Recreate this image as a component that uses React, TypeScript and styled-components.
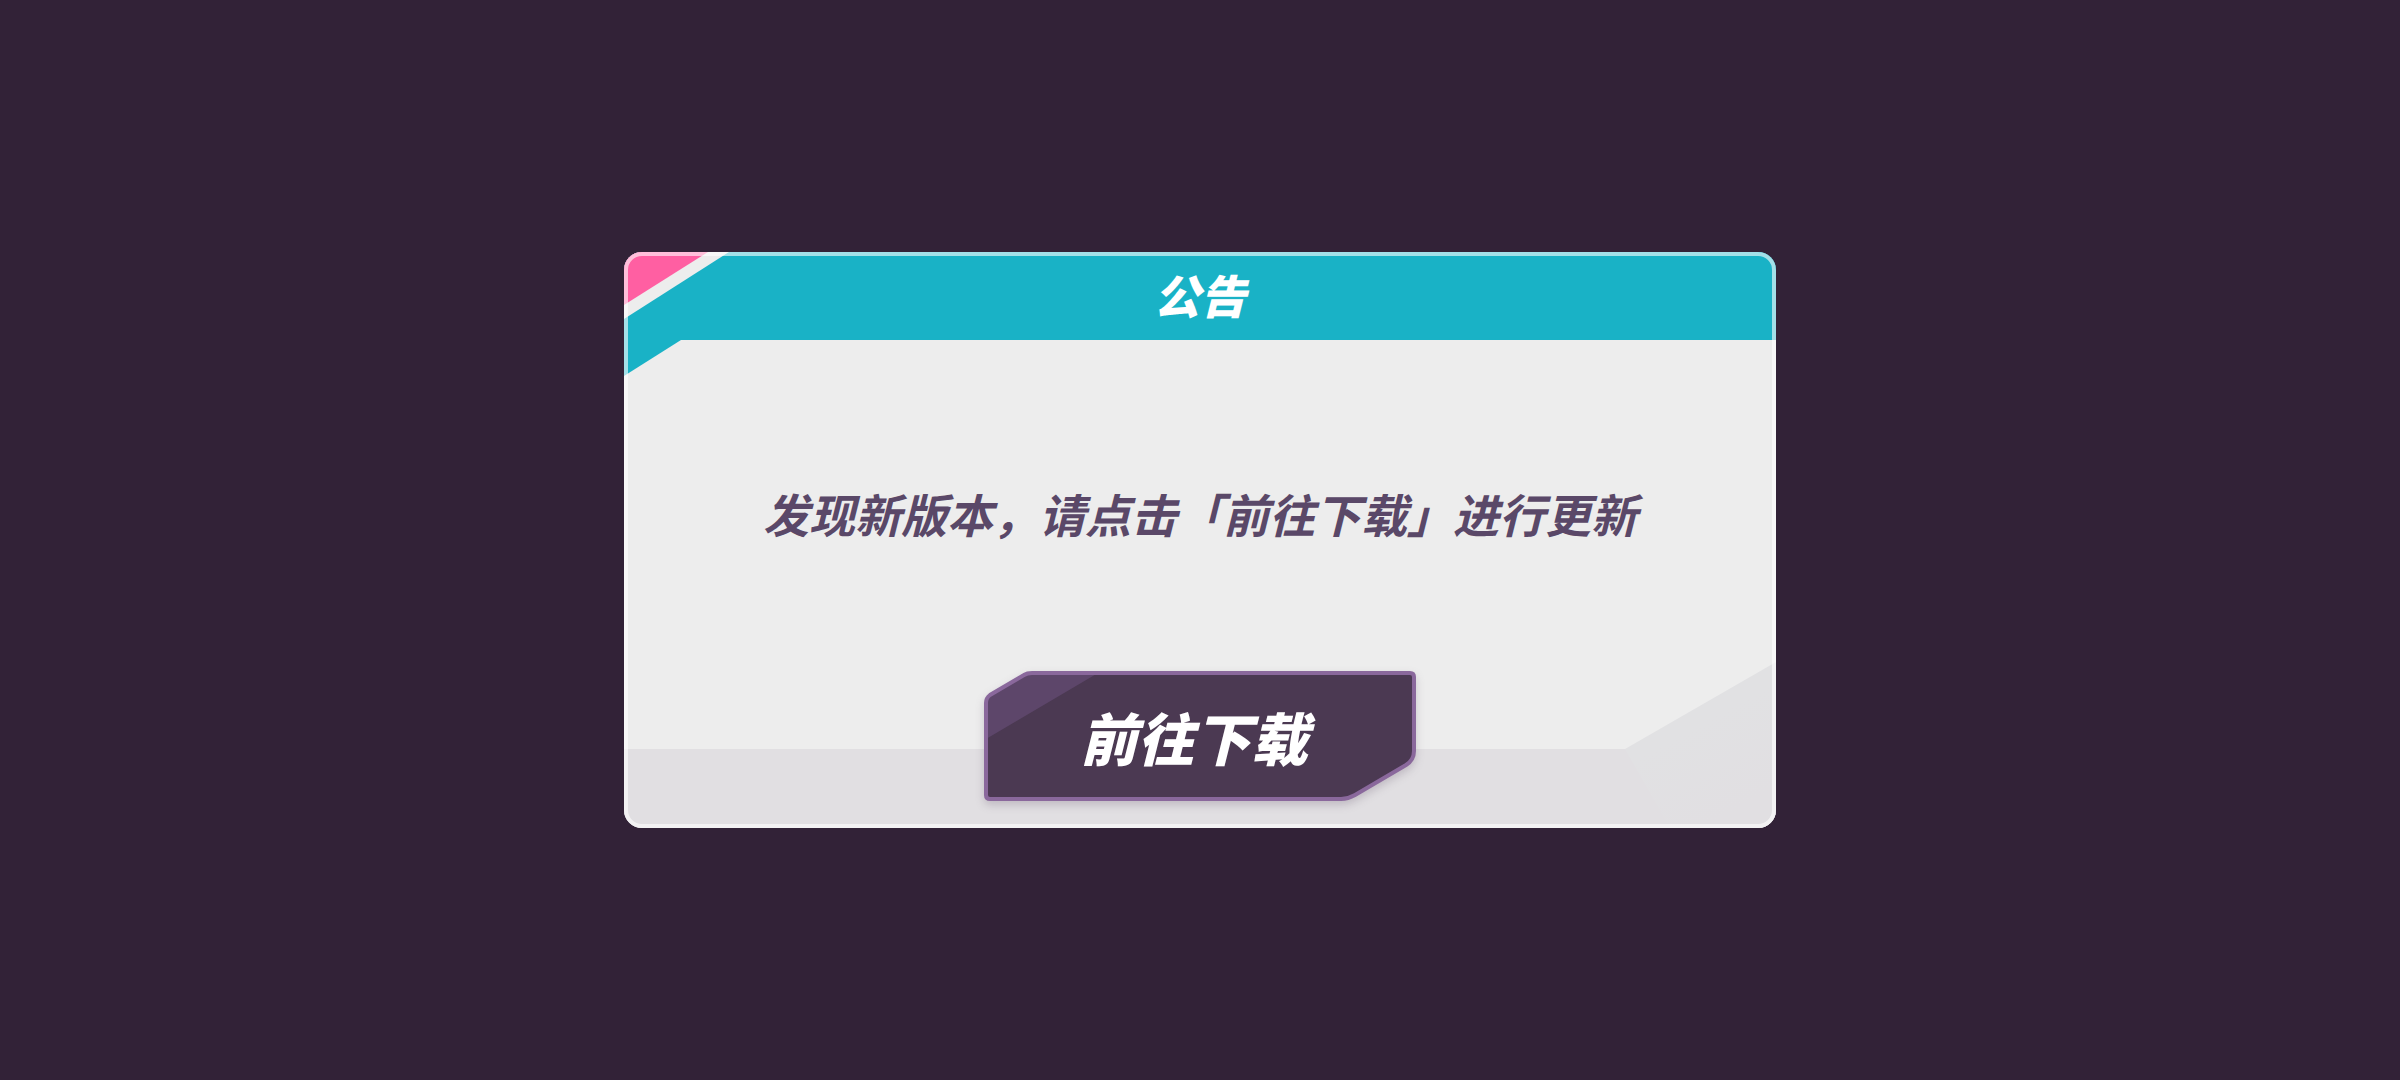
import React from "react";
import styled, { createGlobalStyle } from "styled-components";

const GlobalStyle = createGlobalStyle`
  * {
    box-sizing: border-box;
  }

  body {
    margin: 0;
    background: #322237;
    font-family: "Noto Sans CJK SC", "Noto Sans", sans-serif;
  }
`;

const Backdrop = styled.main`
  display: flex;
  align-items: center;
  justify-content: center;
  min-height: 100vh;
  padding: 24px;
`;

const Dialog = styled.section`
  position: relative;
  display: flex;
  flex-direction: column;
  width: 48vw;
  min-width: min(960px, 100%);
  overflow: hidden;
  border-radius: 18px;
  background: #ededed;

  &::after {
    content: "";
    position: absolute;
    inset: 0;
    border: 4px solid rgba(255, 255, 255, 0.6);
    border-radius: 18px;
    pointer-events: none;
  }
`;

const Header = styled.header`
  display: flex;
  align-items: center;
  justify-content: center;
  height: 88px;
  padding-bottom: 4px;
  background: #19b2c6;
`;

const Title = styled.h1`
  margin: 0;
  color: #fff;
  font-size: 46px;
  font-style: italic;
  font-weight: 900;
  line-height: 66px;
`;

const CornerStripes = styled.svg`
  position: absolute;
  top: 0;
  left: 0;
`;

const Content = styled.div`
  display: flex;
  flex-direction: column;
  align-items: center;
  gap: 125px;
  padding: 140px 24px 27px;
  background: linear-gradient(to top, #e1dfe2 79px, transparent 79px);
`;

const Message = styled.p`
  margin: 0;
  color: #5a4868;
  font-size: 46px;
  font-style: italic;
  font-weight: 700;
  line-height: 66px;
  text-align: center;
`;

const CornerFold = styled.svg`
  position: absolute;
  right: 0;
  bottom: 0;
`;

const ActionButton = styled.button`
  position: relative;
  display: flex;
  align-items: center;
  justify-content: center;
  width: 432px;
  height: 130px;
  padding: 0 12px 0 0;
  border: 0;
  background: none;
  color: #fff;
  font-family: inherit;
  font-size: 57px;
  font-style: italic;
  font-weight: 900;
  line-height: 84px;
  cursor: pointer;
`;

const ButtonPlate = styled.svg`
  position: absolute;
  inset: 0;
  overflow: visible;
  filter: drop-shadow(0 4px 4px rgba(60, 40, 70, 0.2));
`;

const ButtonLabel = styled.span`
  position: relative;
`;

export default function App() {
  return (
    <>
      <GlobalStyle />
      <Backdrop>
        <Dialog role="dialog" aria-labelledby="notice-title" aria-describedby="notice-text">
          <Header>
            <CornerStripes width="105" height="124" viewBox="0 0 105 124" aria-hidden="true">
              <path d="M0 0H105L0 67Z" fill="#ededed" />
              <path d="M0 0H84L0 53Z" fill="#ff5fa2" />
              <path d="M0 88H57L0 124Z" fill="#19b2c6" />
            </CornerStripes>
            <Title id="notice-title">公告</Title>
          </Header>
          <CornerFold width="151" height="166" viewBox="0 0 151 166" aria-hidden="true">
            <defs>
              <linearGradient id="fold" x1="0" y1="0" x2="0.5" y2="1">
                <stop offset="0.5" stopColor="#e1e1e3" />
                <stop offset="1" stopColor="#e1dfe2" />
              </linearGradient>
            </defs>
            <path d="M151 0V166H45L0 87Z" fill="url(#fold)" />
          </CornerFold>
          <Content>
            <Message id="notice-text">发现新版本，请点击「前往下载」进行更新</Message>
            <ActionButton type="button">
              <ButtonPlate width="432" height="130" viewBox="0 0 432 130" aria-hidden="true">
                <path
                  d="M48 2H426Q430 2 430 6V80Q430 89 422 94L371 124Q364 128 357 128H6Q2 128 2 124V32Q2 27 6 24L40 4Q43 2 48 2Z"
                  fill="#4b3952"
                />
                <path d="M48 2H114L2 68V32Q2 27 6 24L40 4Q43 2 48 2Z" fill="#5d466a" />
                <path
                  d="M48 2H426Q430 2 430 6V80Q430 89 422 94L371 124Q364 128 357 128H6Q2 128 2 124V32Q2 27 6 24L40 4Q43 2 48 2Z"
                  fill="none"
                  stroke="#8a689c"
                  strokeWidth="4"
                />
              </ButtonPlate>
              <ButtonLabel>前往下载</ButtonLabel>
            </ActionButton>
          </Content>
        </Dialog>
      </Backdrop>
    </>
  );
}
